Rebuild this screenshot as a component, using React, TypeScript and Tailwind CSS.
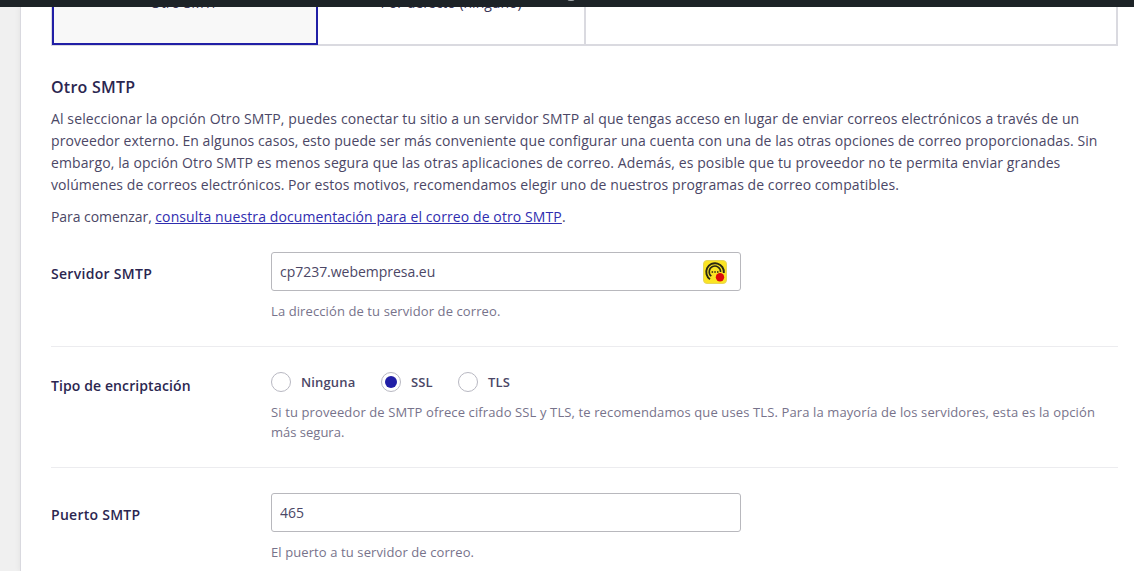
import { useState } from 'react';
import clsx from 'clsx';

interface EncryptionOption {
  value: string;
  label: string;
  className: string;
}

const encryptionOptions: EncryptionOption[] = [
  { value: 'none', label: 'Ninguna', className: 'w-[110px]' },
  { value: 'ssl', label: 'SSL', className: 'w-[77px]' },
  { value: 'tls', label: 'TLS', className: 'w-[77px]' },
];

const ManagerIcon = () => (
  <svg className="h-6 w-6" viewBox="0 0 24 24" fill="none">
    <rect x="0.5" y="0.5" width="23" height="23" rx="3.5" fill="#fbe423" stroke="#e6d65a" />
    <g stroke="#2a2713">
      <path d="M7 19.2A8.8 8.8 0 1 1 20.8 13" strokeWidth="1.9" />
      <path d="M8.3 16.2A5.7 5.7 0 1 1 17.6 12" strokeWidth="1.6" />
    </g>
    <path d="M8.6 12h1.5M11.3 12h1.5M14 12h1.5" stroke="#2a2713" strokeWidth="1.5" />
    <circle cx="17" cy="17.3" r="4.2" fill="#dc0a0a" />
  </svg>
);

const App: React.FC = () => {
  const [server, setServer] = useState('cp7237.webempresa.eu');
  const [port, setPort] = useState('465');
  const [encryption, setEncryption] = useState('ssl');

  const inputClass =
    'block h-[39px] w-[470px] rounded-[3px] border border-[#b8b8bd] bg-white pl-2 text-[14px] tracking-[-0.03px] text-[#4b4766] outline-none';

  return (
    <div className="h-[571px] overflow-hidden bg-[#f0f0f0] font-['Open_Sans','Noto_Sans',sans-serif] text-[#4b4766]">
      {/* Admin bar */}
      <div className="relative z-10 flex h-[7px] justify-center overflow-hidden bg-[#1d2327] pl-2">
        <span className="-mt-[5px] h-[6px] w-2 rounded-full bg-[#9ca1a5]" />
      </div>

      <main className="ml-5 h-[564px] border-l border-[#d9d9df] bg-white pl-[30px] shadow-[0_0_6px_rgba(0,0,0,0.07)]">
        {/* Mailer tabs */}
        <div className="flex h-[39px] w-[1067px] border-r-2 border-b-2 border-l border-[#dadae0] text-[14px] text-[#3a3658]">
          <div className="flex h-[38px] w-[266px] justify-center border-2 border-t-0 border-[#211fa6] bg-[#f8f8f8]">
            <span className="-mt-[14px] h-5 leading-5">Otro SMTP</span>
          </div>
          <div className="flex w-[268px] justify-center border-r-2 border-[#dadae0]">
            <span className="-mt-[14px] h-5 leading-5">Por defecto (ninguno)</span>
          </div>
        </div>

        <section className="pt-[30px]">
          <h2 className="h-[22px] text-[16px] leading-[22px] font-semibold tracking-[0.25px] text-[#2b2650]">
            Otro SMTP
          </h2>
          <p className="mt-[10px] text-[14px] leading-[22px] whitespace-nowrap">
            <span className="tracking-[0.115px]">
              Al seleccionar la opción Otro SMTP, puedes conectar tu sitio a un servidor SMTP al que tengas acceso en lugar de enviar correos electrónicos a través de un
            </span>
            <br />
            <span className="tracking-[0.08px]">
              proveedor externo. En algunos casos, esto puede ser más conveniente que configurar una cuenta con una de las otras opciones de correo proporcionadas. Sin
            </span>
            <br />
            <span className="tracking-[0.108px]">
              embargo, la opción Otro SMTP es menos segura que las otras aplicaciones de correo. Además, es posible que tu proveedor no te permita enviar grandes
            </span>
            <br />
            <span className="tracking-[0.07px]">
              volúmenes de correos electrónicos. Por estos motivos, recomendamos elegir uno de nuestros programas de correo compatibles.
            </span>
          </p>
          <p className="mt-[10px] text-[14px] leading-[22px] whitespace-nowrap">
            <span className="tracking-[-0.06px]">Para comenzar, </span>
            <a href="#docs" className="tracking-[0.1px] text-[#2f2daf] underline">
              consulta nuestra documentación para el correo de otro SMTP
            </a>
            .
          </p>
        </section>

        {/* SMTP host */}
        <div className="mt-6 flex h-[95px] w-[1067px] border-b border-[#ececef]">
          <label
            htmlFor="host"
            className="w-[220px] pt-[11px] text-[14px] leading-[22px] font-semibold tracking-[0.3px] text-[#2b2650]"
          >
            Servidor SMTP
          </label>
          <div>
            <div className="relative">
              <input id="host" className={inputClass} value={server} onChange={(e) => setServer(e.target.value)} />
              <div className="absolute top-2 right-[14px]">
                <ManagerIcon />
              </div>
            </div>
            <p className="mt-[10px] text-[13px] leading-5 tracking-[0.1px] text-[#77738b]">
              La dirección de tu servidor de correo.
            </p>
          </div>
        </div>

        {/* Encryption */}
        <div className="flex h-[121px] w-[1067px] border-b border-[#ececef] pt-[25px]">
          <div className="w-[220px] pt-[3px] text-[14px] leading-[22px] font-semibold tracking-[0.1px] text-[#2b2650]">
            Tipo de encriptación
          </div>
          <div>
            <div className="flex h-5">
              {encryptionOptions.map((option) => (
                <button
                  key={option.value}
                  role="radio"
                  aria-checked={encryption === option.value}
                  onClick={() => setEncryption(option.value)}
                  className={clsx(
                    'flex items-center gap-[10px] text-[13px] font-semibold tracking-[0.15px]',
                    option.className,
                  )}
                >
                  <span className="flex h-5 w-5 shrink-0 items-center justify-center rounded-full border border-[#b8b8c2] bg-white">
                    {encryption === option.value && <span className="h-3 w-3 rounded-full bg-[#211fa6]" />}
                  </span>
                  <span className="pt-[2px]">{option.label}</span>
                </button>
              ))}
            </div>
            <p className="mt-[10px] text-[13px] leading-5 whitespace-nowrap text-[#77738b]">
              <span className="tracking-[0.118px]">
                Si tu proveedor de SMTP ofrece cifrado SSL y TLS, te recomendamos que uses TLS. Para la mayoría de los servidores, esta es la opción
              </span>
              <br />
              más segura.
            </p>
          </div>
        </div>

        {/* SMTP port */}
        <div className="flex w-[1067px] pt-[25px]">
          <label
            htmlFor="port"
            className="w-[220px] pt-[11px] text-[14px] leading-[22px] font-semibold tracking-[0.27px] text-[#2b2650]"
          >
            Puerto SMTP
          </label>
          <div>
            <input id="port" className={inputClass} value={port} onChange={(e) => setPort(e.target.value)} />
            <p className="mt-[10px] text-[13px] leading-5 tracking-[0.1px] text-[#77738b]">
              El puerto a tu servidor de correo.
            </p>
          </div>
        </div>
      </main>
    </div>
  );
};

export default App;
